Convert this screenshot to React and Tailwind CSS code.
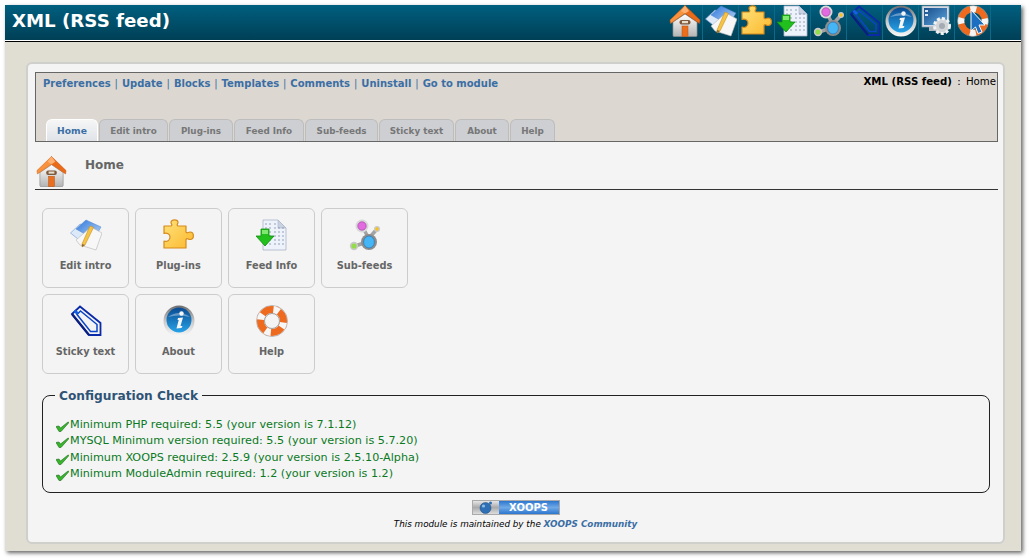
import React from "react";

const font = "font-['DejaVu_Sans','Liberation_Sans',sans-serif]";

const HomeIcon = ({ size = 32 }) => (
  <svg width={size} height={size} viewBox="0 0 32 32">
    <defs>
      <linearGradient id="wall" x1="0" y1="0" x2="0" y2="1">
        <stop offset="0" stopColor="#ffffff" />
        <stop offset="1" stopColor="#b4b4b4" />
      </linearGradient>
    </defs>
    <path d="M4 17 L16 9 L28 17 L28 30.5 Q28 31.5 27 31.5 L5 31.5 Q4 31.5 4 30.5 Z" fill="url(#wall)" stroke="#8f8f8f" strokeWidth="0.7" />
    <path d="M16 0.5 L1 15 L1.5 18.5 L16 8.5 Z" fill="#f8923c" stroke="#cf5a10" strokeWidth="0.5" />
    <path d="M16 0.5 L31 15 L30.5 18.5 L16 8.5 Z" fill="#ea6a18" stroke="#c24e0a" strokeWidth="0.5" />
    <path d="M16 0.5 L12 6 L16 8.5 L20 6 Z" fill="#ffb070" />
    <rect x="10.5" y="15" width="11" height="4.5" rx="2" fill="#7d5a3c" />
    <rect x="13" y="16" width="6" height="2.2" fill="#e8dccb" />
    <rect x="13" y="21" width="6" height="10.5" fill="#e96f1e" stroke="#b84f0e" strokeWidth="0.5" />
  </svg>
);

const EditIcon = ({ size = 32 }) => (
  <svg width={size} height={size} viewBox="0 0 32 32">
    <defs>
      <linearGradient id="bluepage" x1="0" y1="0" x2="1" y2="1">
        <stop offset="0" stopColor="#2f78dc" />
        <stop offset="1" stopColor="#bcd8f5" />
      </linearGradient>
    </defs>
    <path d="M0.5 14 L10 5 L26 12 L18 28 Z" fill="#dce9f8" stroke="#7fa3d6" strokeWidth="0.7" />
    <path d="M6 10 L16 1 L31 8 L24 20 Z" fill="url(#bluepage)" stroke="#4a7ecb" strokeWidth="0.5" />
    <path d="M6 21 L21 8 L32 14 L26 31 L10 26 Z" fill="#f7f7f7" stroke="#b5b5b5" strokeWidth="0.6" />
    <path d="M12 25 L20 7 L23.5 8.5 L15 26 L12 28 Z" fill="#f6c445" stroke="#c98f1c" strokeWidth="0.6" />
    <path d="M12 25 L12 28 L15 26 Z" fill="#8a6a3a" />
  </svg>
);

const PuzzleIcon = ({ size = 32 }) => (
  <svg width={size} height={size} viewBox="0 0 32 32">
    <defs>
      <linearGradient id="puzzle" x1="0" y1="0" x2="1" y2="1">
        <stop offset="0" stopColor="#ffe27a" />
        <stop offset="1" stopColor="#fbb82e" />
      </linearGradient>
    </defs>
    <path
      d="M1 7 L8 7 C10 6 8 5 8 3.5 C8 0 15 0 15 3.5 C15 5 13 6 15 7 L23 7 L23 13 C24 15 25 13 27 13 C31.5 13 31.5 20.5 27 20.5 C25 20.5 24 18.5 23 20.5 L23 29 L1 29 L1 22 C4 23 7 21.5 7 18 C7 15 4 13.5 1 14.5 Z"
      fill="url(#puzzle)"
      stroke="#d58a1a"
      strokeWidth="1.2"
      strokeLinejoin="round"
    />
  </svg>
);

const FeedIcon = ({ size = 32 }) => (
  <svg width={size} height={size} viewBox="0 0 32 32">
    <path d="M7 1 L22 1 L30 9 L30 31 L7 31 Z" fill="#eef2fa" stroke="#a9b4c8" strokeWidth="0.8" />
    <path d="M22 1 L22 9 L30 9 Z" fill="#c9d2e2" stroke="#a9b4c8" strokeWidth="0.6" />
    <g fill="#8a97ad">
      {[5, 9, 13, 17, 21, 25].map((y) =>
        [10, 14, 19, 23, 27].map((x) =>
          y < 9 && x > 20 ? null : <circle key={`${x}-${y}`} cx={x} cy={y} r="0.8" />
        )
      )}
    </g>
    <path d="M5 10 L13 10 L13 17 L18 17 L9 27 L0 17 L5 17 Z" fill="#22c01c" stroke="#0f8d12" strokeWidth="0.8" />
    <path d="M6 11 L12 11 L12 15 L6 15 Z" fill="#7fe86e" />
  </svg>
);

const SubfeedIcon = ({ size = 32 }) => (
  <svg width={size} height={size} viewBox="0 0 32 32">
    <g stroke="#a3a3a3" strokeWidth="3.5" fill="none">
      <path d="M13 7 L19 18" />
      <path d="M28 10 L21 18" />
      <path d="M6 27 L18 23" />
    </g>
    <circle cx="13" cy="7" r="6.5" fill="#d8d8d8" />
    <circle cx="13" cy="7" r="4.2" fill="#e36be0" stroke="#9b3aa0" strokeWidth="0.6" />
    <circle cx="28" cy="10" r="3" fill="#c9c9c9" />
    <circle cx="28" cy="10" r="1.7" fill="#f7c21c" />
    <circle cx="5" cy="27" r="4.2" fill="#c9c9c9" />
    <circle cx="5" cy="27" r="2.6" fill="#93dc4a" />
    <circle cx="20" cy="23" r="8" fill="#8d8d8d" />
    <ellipse cx="20" cy="23" rx="5.4" ry="6" fill="#45b5f5" stroke="#1e6fb0" strokeWidth="0.6" />
  </svg>
);

const StickyIcon = ({ size = 32 }) => (
  <svg width={size} height={size} viewBox="0 0 32 32">
    <g fill="none" strokeLinejoin="miter">
      <path d="M2 9 L10 1.5 L30.5 18 L30.5 30 L19 30 Z" stroke="#0a2aa8" strokeWidth="1.8" />
      <path d="M7 9.5 L10.5 6 L27 19.5 L27 26.5 L20.5 26.5 Z" stroke="#0b46c8" strokeWidth="1.5" />
      <path d="M2 9 L19 30" stroke="#0a1f80" strokeWidth="2.2" />
      <path d="M4.5 5.5 L8 9" stroke="#1560e0" strokeWidth="3" />
    </g>
  </svg>
);

const InfoIcon = ({ size = 32 }) => (
  <svg width={size} height={size} viewBox="0 0 32 32">
    <defs>
      <linearGradient id="inforing" x1="0" y1="0" x2="0" y2="1">
        <stop offset="0" stopColor="#6d6d6d" />
        <stop offset="0.5" stopColor="#c8c8c8" />
        <stop offset="1" stopColor="#f8f8f8" />
      </linearGradient>
      <linearGradient id="infoblue" x1="0" y1="0" x2="0" y2="1">
        <stop offset="0" stopColor="#0a4a90" />
        <stop offset="1" stopColor="#27a3e8" />
      </linearGradient>
    </defs>
    <circle cx="16" cy="16" r="15.5" fill="url(#inforing)" />
    <circle cx="16" cy="15" r="12.5" fill="url(#infoblue)" />
    <path d="M5 12 Q16 4 27 12 Q16 9 5 12 Z" fill="#ffffff" opacity="0.35" />
    <circle cx="18.5" cy="8.5" r="2.2" fill="#f5f5f5" />
    <path d="M15 13 L20 12.5 L17.5 21 L19.5 21 L18.5 23 L13.5 23.5 L15.7 15 L14.5 15 Z" fill="#f5f5f5" />
  </svg>
);

const SystemIcon = ({ size = 32 }) => (
  <svg width={size} height={size} viewBox="0 0 32 32">
    <defs>
      <linearGradient id="screen" x1="0" y1="0" x2="1" y2="1">
        <stop offset="0" stopColor="#1a4f8c" />
        <stop offset="1" stopColor="#5ba4dc" />
      </linearGradient>
    </defs>
    <rect x="1" y="1" width="27" height="21" fill="#d4dae2" stroke="#8d99a8" strokeWidth="0.7" />
    <rect x="3" y="3" width="23" height="17" fill="url(#screen)" />
    <rect x="4" y="5" width="3" height="2" fill="#dce8f4" />
    <rect x="4" y="9" width="3" height="2" fill="#dce8f4" />
    <rect x="8" y="22" width="9" height="4" fill="#aeb5bf" />
    <circle cx="21" cy="21" r="7.5" fill="#d2d5d8" stroke="#f2f2f2" strokeWidth="3" strokeDasharray="3 2" />
    <circle cx="21" cy="21" r="3" fill="#a5abb2" />
  </svg>
);

const HelpCursorIcon = ({ size = 32 }) => (
  <svg width={size} height={size} viewBox="0 0 32 32">
    <circle cx="16" cy="16" r="12" fill="none" stroke="#ee6a1f" strokeWidth="6.5" />
    <circle cx="16" cy="16" r="12" fill="none" stroke="#f4f4f4" strokeWidth="6.5" strokeDasharray="6 12.85" strokeDashoffset="3" />
    <circle cx="16" cy="16" r="15.5" fill="none" stroke="#9a9a9a" strokeWidth="0.6" />
    <path d="M14 5 L28 20 L22 20 L25 27 L21 28.5 L18.5 22 L14 26 Z" fill="#1c6fc0" stroke="#ffffff" strokeWidth="1" />
  </svg>
);

const HelpIcon = ({ size = 32 }) => (
  <svg width={size} height={size} viewBox="0 0 32 32">
    <circle cx="16" cy="16" r="15.5" fill="none" stroke="#a5a5a5" strokeWidth="0.8" />
    <circle cx="16" cy="16" r="11.5" fill="none" stroke="#ee6a1f" strokeWidth="7" />
    <circle cx="16" cy="16" r="11.5" fill="none" stroke="#f6f6f6" strokeWidth="7" strokeDasharray="6 12.06" strokeDashoffset="3" transform="rotate(20 16 16)" />
    <circle cx="16" cy="16" r="7.5" fill="none" stroke="#8e8e8e" strokeWidth="0.8" />
  </svg>
);

const CheckIcon = () => (
  <svg width="13" height="11" viewBox="0 0 13 11" className="shrink-0 mt-[3px]">
    <path d="M0 5.5 L3 5 L4.5 7 L12 1 L13 1.5 L5 10.5 L3 10.5 Z" fill="#38b62a" stroke="#1c6a20" strokeWidth="0.6" />
  </svg>
);

const XoopsBall = () => (
  <svg width="14" height="13" viewBox="0 0 14 13">
    <circle cx="6.5" cy="7" r="5.5" fill="#2f6fb5" stroke="#1d4a80" strokeWidth="0.5" />
    <circle cx="4.5" cy="5" r="1.6" fill="#8fbbe6" />
    <circle cx="11.5" cy="2" r="1.5" fill="#2f6fb5" />
  </svg>
);

const topLinks = ["Preferences", "Update", "Blocks", "Templates", "Comments", "Uninstall", "Go to module"];

const tabs = [
  { name: "Home", width: "w-[52px]", active: true },
  { name: "Edit intro", width: "w-[69px]" },
  { name: "Plug-ins", width: "w-[64px]" },
  { name: "Feed Info", width: "w-[70px]" },
  { name: "Sub-feeds", width: "w-[73px]" },
  { name: "Sticky text", width: "w-[75px]" },
  { name: "About", width: "w-[54px]" },
  { name: "Help", width: "w-[45px]" },
];

const headerIcons = [HomeIcon, EditIcon, PuzzleIcon, FeedIcon, SubfeedIcon, StickyIcon, InfoIcon, SystemIcon, HelpCursorIcon];

const buttons = [
  { name: "Edit intro", Icon: EditIcon },
  { name: "Plug-ins", Icon: PuzzleIcon },
  { name: "Feed Info", Icon: FeedIcon },
  { name: "Sub-feeds", Icon: SubfeedIcon },
  { name: "Sticky text", Icon: StickyIcon },
  { name: "About", Icon: InfoIcon },
  { name: "Help", Icon: HelpIcon },
];

const checks = [
  "Minimum PHP required: 5.5 (your version is 7.1.12)",
  "MYSQL Minimum version required: 5.5 (your version is 5.7.20)",
  "Minimum XOOPS required: 2.5.9 (your version is 2.5.10-Alpha)",
  "Minimum ModuleAdmin required: 1.2 (your version is 1.2)",
];

const App = () => {
  return (
    <div className={`w-[1030px] h-[560px] overflow-hidden bg-white pt-[5px] pl-[5px] ${font}`}>
      <div className="w-[1016px] h-[546px] bg-[#e0ddd2] shadow-[2px_2px_4px_#666]">
        {/* top bar */}
        <div className="h-[37px] flex justify-between bg-gradient-to-b from-[#005f7f] to-[#003f55] border-b border-black shadow-[inset_0_-1px_0_#fff]">
          <h1 className="pl-[7px] pt-[4px] text-[18.2px] leading-[24px] font-bold text-white">XML (RSS feed)</h1>
          <div className="flex pr-[30px] h-[35px]">
            {headerIcons.map((Icon, i) => (
              <div key={i} className="w-[36px] flex justify-center border-r border-[#0a6a88]">
                <Icon size={32} />
              </div>
            ))}
          </div>
        </div>

        {/* main panel */}
        <div className="ml-[21px] mt-[20px] w-[979px] h-[482px] bg-[#f4f4f4] border-2 border-[#cfcfcb] rounded-md pt-[8px] pl-[7px]">
          <div className="w-[963px] h-[70px] border border-[#666] bg-[#dcd7d0] relative">
            <div className="flex justify-between pl-[7px] pr-[1px] pt-[1px]">
              <div className="text-[10px] leading-[20px] font-bold text-[#3a6ea5]">
                {topLinks.map((link, i) => (
                  <span key={link}>
                    {i > 0 && <span className="font-normal mx-[0.75px]"> | </span>}
                    {link}
                  </span>
                ))}
              </div>
              <div className="text-[10.2px] leading-[16px] text-black">
                <span className="font-bold">XML (RSS feed)</span>
                <span className="mx-[2px]"> : </span>Home
              </div>
            </div>
            <div className="absolute left-[10px] bottom-0 flex gap-[1px]">
              {tabs.map((tab) => (
                <div
                  key={tab.name}
                  className={`${tab.width} h-[22px] rounded-t-md border border-b-0 text-center leading-[22px] font-bold ${
                    tab.active
                      ? "text-[9.2px] bg-gradient-to-b from-[#f6f6f6] to-[#dfe3e8] border-white text-[#3a6ea5]"
                      : "text-[8.8px] bg-[#cdcfd3] border-[#bdbdbd] text-[#777]"
                  }`}
                >
                  {tab.name}
                </div>
              ))}
            </div>
          </div>

          {/* page heading */}
          <div className="w-[963px] h-[48px] flex border-b border-[#333] pt-[14px] pl-[1px]">
            <HomeIcon size={31} />
            <div className="pl-[18px] text-[12px] leading-[18px] font-bold text-[#666]">Home</div>
          </div>

          {/* shortcut buttons */}
          <div className="pl-[7px] pt-[18px] w-[380px] flex flex-wrap gap-[6px]">
            {buttons.map(({ name, Icon }) => (
              <div
                key={name}
                className="w-[87px] h-[80px] border border-[#ccc] rounded-md flex flex-col items-center pt-[10px]"
              >
                <Icon size={32} />
                <div className="mt-[7px] text-[9.8px] leading-[16px] font-bold text-[#666]">{name}</div>
              </div>
            ))}
          </div>

          {/* config check */}
          <fieldset className="ml-[7px] mt-[11px] w-[948px] h-[108px] border border-[#222] rounded-lg pl-[13px] pr-[10px]">
            <legend className="px-[4px] pt-[2px] -ml-[1px] text-[12.2px] leading-[18px] font-bold text-[#2f5376]">Configuration Check</legend>
            <div className="pt-[12px]">
              {checks.map((line) => (
                <div key={line} className="h-[16.3px] flex items-center gap-[1px] text-[11.2px] leading-[16px] text-[#0b7a1f]">
                  <CheckIcon />
                  {line}
                </div>
              ))}
            </div>
          </fieldset>

          {/* footer */}
          <div className="w-[963px] flex flex-col items-center pt-[7px] -ml-[1px]">
            <div className="w-[88px] h-[15px] flex border border-[#aaa]">
              <div className="w-[26px] bg-gradient-to-b from-[#e6e6e6] via-[#aaa] to-[#ddd] flex items-center justify-center">
                <XoopsBall />
              </div>
              <div className="flex-1 bg-gradient-to-b from-[#2a76cf] via-[#6fa8e6] to-[#2a76cf] text-center text-[10px] leading-[13px] font-bold text-white">XOOPS</div>
            </div>
            <div className="mt-[2px] text-[8.8px] leading-[14px] italic text-black">
              This module is maintained by the <span className="font-bold text-[#3a6ea5]">XOOPS Community</span>
            </div>
          </div>
        </div>
      </div>
    </div>
  );
};

export default App;
